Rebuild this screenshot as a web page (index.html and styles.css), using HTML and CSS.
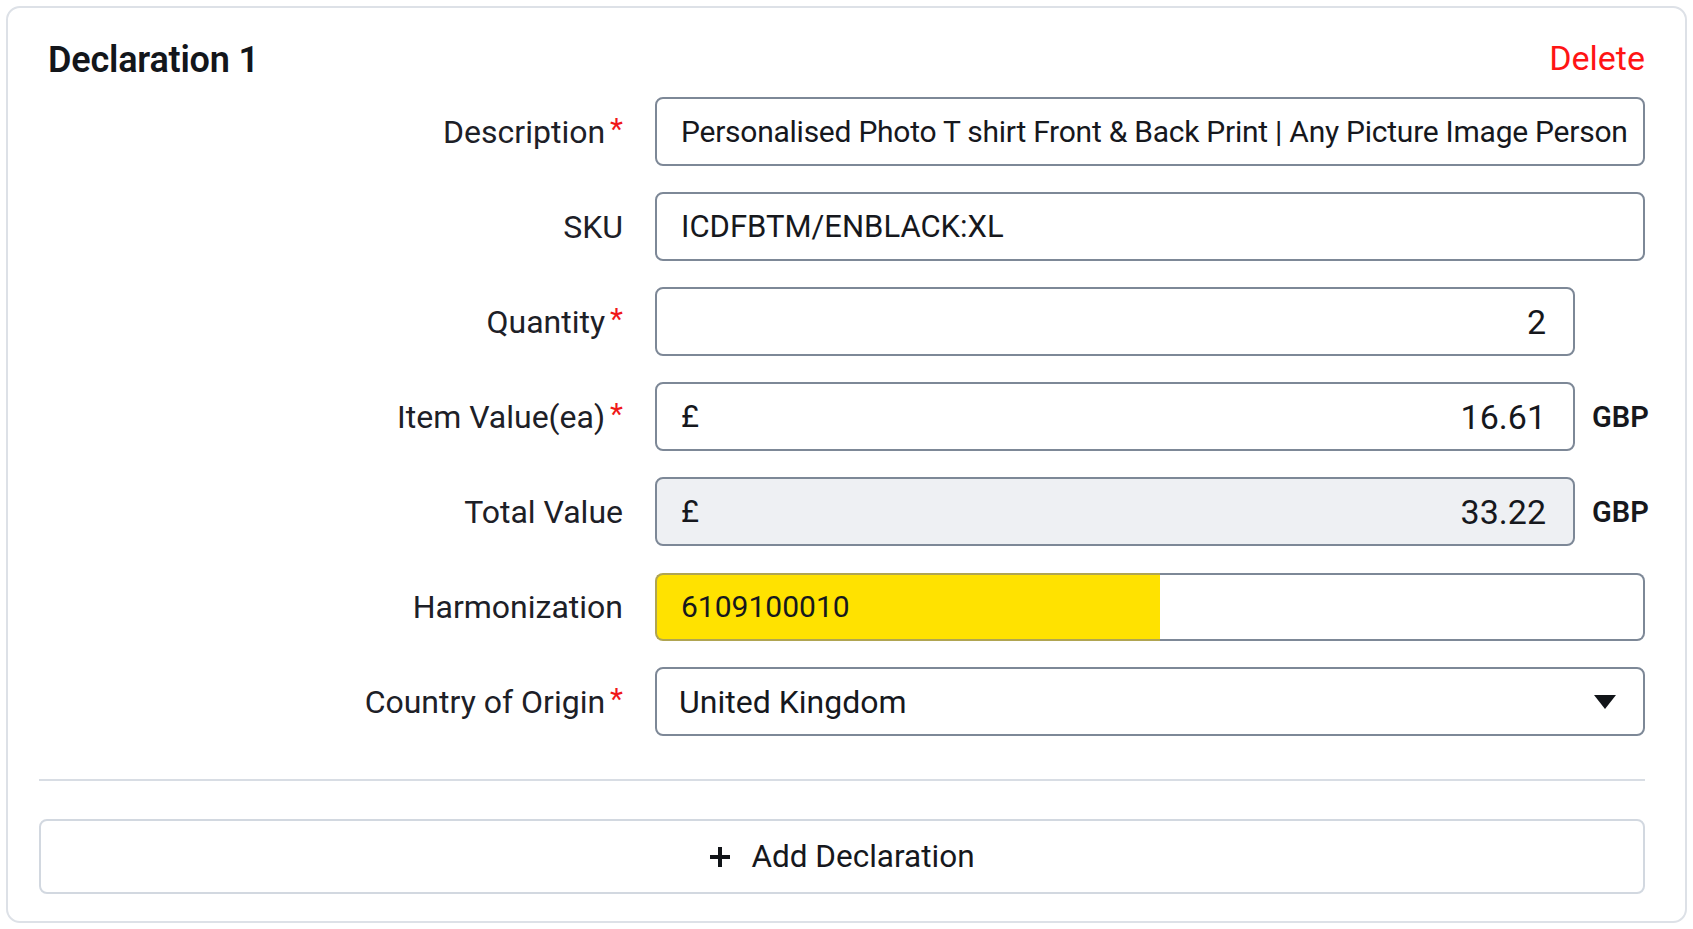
FILE: index.html
```html
<!DOCTYPE html>
<html lang="en">
<head>
<meta charset="utf-8">
<title>Declaration</title>
<link rel="stylesheet" href="styles.css">
</head>
<body>
<div class="card">
  <div class="card-head">
    <h2 class="title">Declaration 1</h2>
    <a class="delete" href="#">Delete</a>
  </div>
  <div class="form">
    <label class="label">Description<span class="req">*</span></label>
    <div class="field">
      <div class="box desc">Personalised Photo T shirt Front &amp; Back Print | Any Picture Image Person</div>
    </div>

    <label class="label">SKU</label>
    <div class="field">
      <div class="box">ICDFBTM/ENBLACK:XL</div>
    </div>

    <label class="label">Quantity<span class="req">*</span></label>
    <div class="field">
      <div class="box narrow align-right"><span class="num">2</span></div>
    </div>

    <label class="label">Item Value(ea)<span class="req">*</span></label>
    <div class="field">
      <div class="box narrow split"><span>£</span><span class="num">16.61</span></div>
      <span class="suffix">GBP</span>
    </div>

    <label class="label">Total Value</label>
    <div class="field">
      <div class="box narrow split readonly"><span>£</span><span class="num">33.22</span></div>
      <span class="suffix">GBP</span>
    </div>

    <label class="label">Harmonization</label>
    <div class="field">
      <div class="harm">
        <div class="harm-fill">6109100010</div>
        <div class="harm-rest"></div>
      </div>
    </div>

    <label class="label">Country of Origin<span class="req">*</span></label>
    <div class="field">
      <div class="box select">
        <span>United Kingdom</span>
        <svg class="caret" width="22" height="14" viewBox="0 0 22 14"><path d="M0 0H22L11 14Z" fill="#111418"/></svg>
      </div>
    </div>
  </div>
  <hr class="divider">
  <button class="add-btn" type="button">
    <svg class="plus" width="22" height="22" viewBox="0 0 22 22"><path d="M11 1V21M1 11H21" stroke="#111418" stroke-width="4" fill="none"/></svg>
    <span>Add Declaration</span>
  </button>
</div>
</body>
</html>
```

FILE: styles.css
```css
* { box-sizing: border-box; }

html, body {
  margin: 0;
  padding: 0;
  background: #ffffff;
}

body {
  padding: 6px;
  font-family: Roboto, "Liberation Sans", Arial, sans-serif;
  color: #1b1e24;
}

.card {
  border: 2px solid #dde1e7;
  border-radius: 14px;
  background: #ffffff;
  padding: 31px 40px 27px 31px;
  height: 917px;
}

.card-head {
  display: flex;
  justify-content: space-between;
  align-items: center;
  height: 42px;
  margin-bottom: 16px;
}

.title {
  margin: 0 0 0 9px;
  font-size: 36px;
  font-weight: 600;
  line-height: 42px;
  color: #13161b;
  letter-spacing: -0.2px;
}

.delete {
  color: #ff1414;
  text-decoration: none;
  font-size: 34px;
  line-height: 42px;
  margin-top: -4px;
}

.form {
  display: grid;
  grid-template-columns: 584px minmax(0, 1fr);
  column-gap: 32px;
  row-gap: 26px;
}

.label {
  display: flex;
  align-items: center;
  justify-content: flex-end;
  height: 69px;
  font-size: 32px;
  color: #1d2027;
  white-space: nowrap;
}

.req {
  color: #f01818;
  font-size: 30px;
  margin-left: 5px;
  position: relative;
  top: -3px;
}

.field {
  display: flex;
  align-items: center;
  height: 69px;
  min-width: 0;
}

.box {
  flex: 1;
  min-width: 0;
  height: 69px;
  border: 2px solid #7d8897;
  border-radius: 8px;
  background: #ffffff;
  display: flex;
  align-items: center;
  padding: 0 27px 0 24px;
  font-size: 31px;
  color: #16181d;
  white-space: nowrap;
  overflow: hidden;
}

.desc {
  font-size: 30px;
  letter-spacing: -0.25px;
  padding-right: 8px;
}

.narrow {
  flex: none;
  width: 920px;
}

.num {
  font-size: 34px;
}

.align-right {
  justify-content: flex-end;
}

.split {
  justify-content: space-between;
}

.readonly {
  background: #eef0f3;
}

.suffix {
  margin-left: 17px;
  font-size: 29px;
  font-weight: 600;
  color: #16181d;
}

.harm {
  flex: 1;
  display: flex;
  height: 68px;
}

.harm-fill {
  width: 505px;
  background: #ffe200;
  border: 2px solid #b0a552;
  border-right: none;
  border-radius: 8px 0 0 8px;
  display: flex;
  align-items: center;
  padding-left: 24px;
  font-size: 30px;
  color: #16181d;
}

.harm-rest {
  flex: 1;
  border: 2px solid #7d8897;
  border-left: none;
  border-radius: 0 8px 8px 0;
  background: #ffffff;
}

.select {
  justify-content: space-between;
  padding-left: 22px;
  padding-right: 27px;
  font-size: 32px;
}

.caret {
  display: block;
}

.divider {
  border: none;
  height: 2px;
  background: #d8dde4;
  margin: 43px 0 38px 0;
}

.add-btn {
  width: 100%;
  height: 75px;
  border: 2px solid #d2d8e0;
  border-radius: 8px;
  background: #ffffff;
  display: flex;
  align-items: center;
  justify-content: center;
  gap: 20px;
  font-family: Roboto, "Liberation Sans", Arial, sans-serif;
  font-size: 31.5px;
  color: #16181d;
  cursor: pointer;
  padding: 0;
}

.plus {
  display: block;
}
```
